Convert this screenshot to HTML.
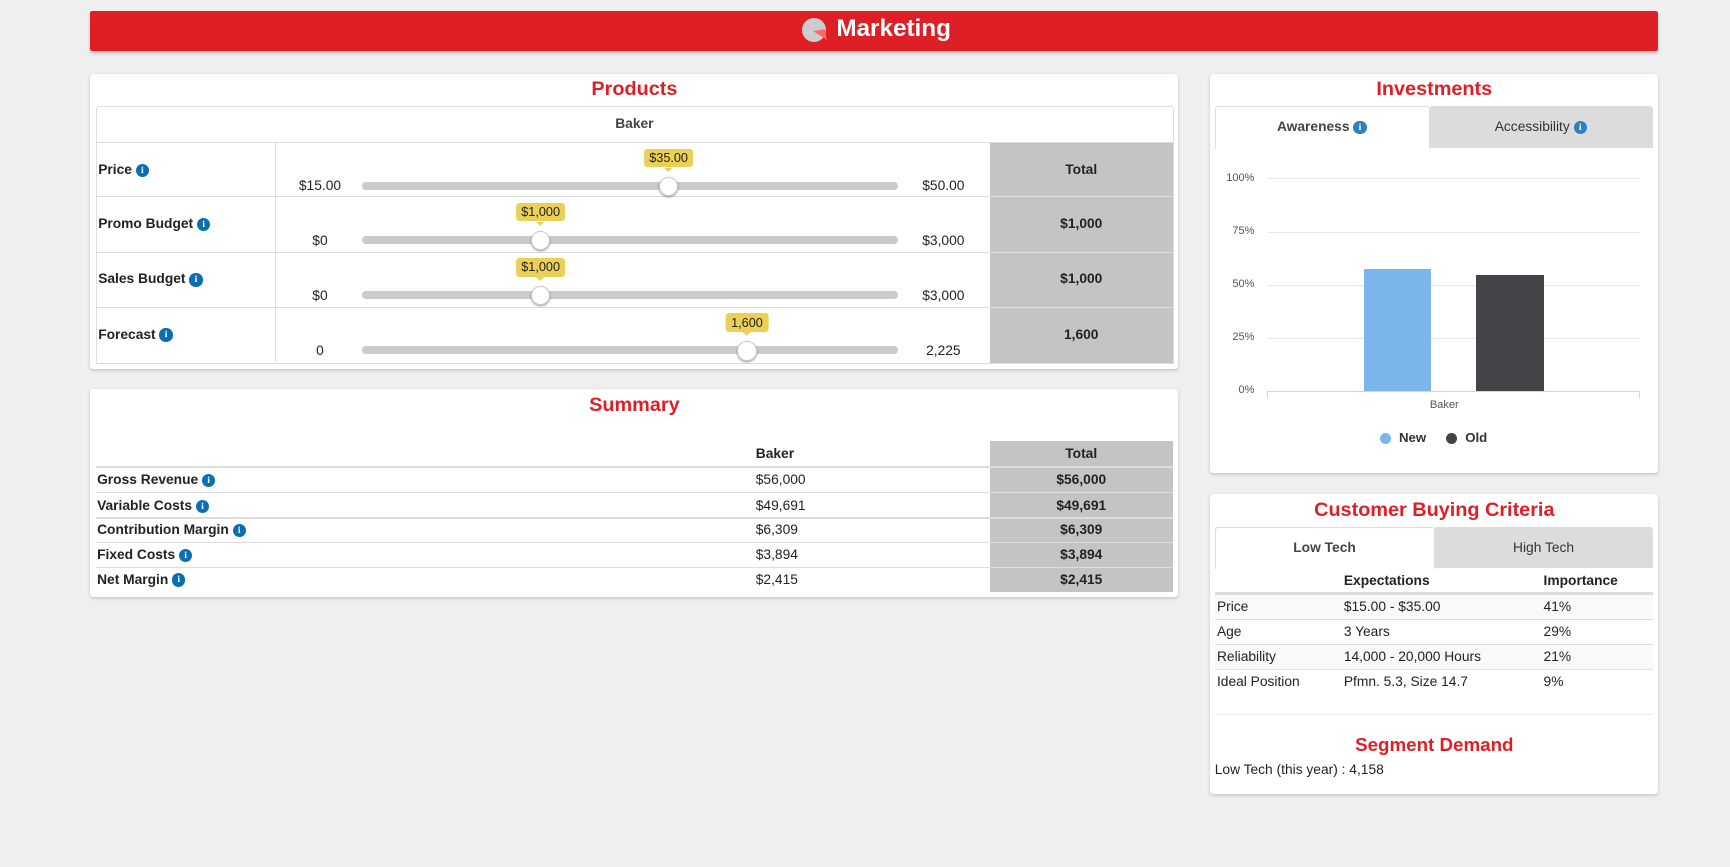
<!DOCTYPE html>
<html><head><meta charset="utf-8"><style>
html,body{margin:0;padding:0;background:#efefef;overflow:hidden}
#w{zoom:1.10332;position:relative;width:1568px;height:786px;font-family:"Liberation Sans",Arial,sans-serif;color:#222;font-size:12.5px}
.a{position:absolute}
.card{position:absolute;background:#fff;border-radius:3px;box-shadow:0 1px 3px rgba(0,0,0,.18)}
.t{position:absolute;left:0;right:0;text-align:center;color:#df1f26;font-weight:bold;font-size:18px}
.i{display:inline-block;width:12px;height:12px;border-radius:50%;background:#0a6fb0;color:#fff;font-size:9px;line-height:12px;text-align:center;font-weight:bold;vertical-align:1px;font-family:"Liberation Serif",serif}
.hl{position:absolute;height:1px;background:#ddd}
.vl{position:absolute;width:1px;background:#ddd}
.gray{position:absolute;background:#c4c4c4}
.b{font-weight:bold}
.track{position:absolute;left:328px;width:486px;height:7px;border-radius:4px;background:#cbcbcb}
.th{position:absolute;width:16px;height:16px;border-radius:50%;background:#fff;box-shadow:0 1px 2px rgba(0,0,0,.4);border:1px solid #ccc}
.tip{position:absolute;background:#ebd057;border-radius:3px;font-size:11.5px;padding:2px 5px;transform:translateX(-50%)}
.tip:after{content:"";position:absolute;left:50%;bottom:-4px;margin-left:-4px;border:4px solid transparent;border-bottom:0;border-top-color:#ebd057}
</style></head><body><div id="w">
<div class="a" style="left:82px;top:10px;width:1421px;height:36px;background:#df1f26;box-shadow:0 2px 3px rgba(0,0,0,.2);border-radius:2px"></div>
<div class="a" style="left:727px;top:16px;width:22px;height:22px;border-radius:50%;background:#ccc"></div>
<div class="a" style="left:738px;top:27px;width:0;height:0;border-left:11px solid transparent;border-top:10px solid #f66;transform:rotate(-10deg)"></div>
<div class="a" style="left:758px;top:14px;color:#fff;font-weight:bold;font-size:22px">Marketing</div>

<div class="card" style="left:82px;top:67px;width:986px;height:267px">
<div class="t" style="top:4px">Products</div></div>
<div class="a" style="left:87px;top:96px;width:975px;height:232px;border:1px solid #ddd;border-radius:3px 3px 0 0"></div>
<div class="a b" style="left:87px;top:105px;width:976px;text-align:center;color:#444">Baker</div>
<div class="gray" style="left:897px;top:129px;width:166px;height:200px"></div>
<div class="hl" style="left:87px;top:129px;width:976px"></div>
<div class="hl" style="left:87px;top:178px;width:976px"></div>
<div class="hl" style="left:87px;top:228px;width:976px"></div>
<div class="hl" style="left:87px;top:278px;width:976px"></div>
<div class="vl" style="left:249px;top:129px;height:199px"></div>
<div class="a b" style="left:89px;top:147px">Price <span class="i">i</span></div>
<div class="a b" style="left:89px;top:196px">Promo Budget <span class="i">i</span></div>
<div class="a b" style="left:89px;top:246px">Sales Budget <span class="i">i</span></div>
<div class="a b" style="left:89px;top:296px">Forecast <span class="i">i</span></div>
<div class="a b" style="left:897px;top:147px;width:166px;text-align:center">Total</div>
<div class="a b" style="left:897px;top:196px;width:166px;text-align:center">$1,000</div>
<div class="a b" style="left:897px;top:246px;width:166px;text-align:center">$1,000</div>
<div class="a b" style="left:897px;top:296px;width:166px;text-align:center">1,600</div>
<div class="a" style="left:250px;top:161px;width:80px;text-align:center">$15.00</div>
<div class="a" style="left:250px;top:211px;width:80px;text-align:center">$0</div>
<div class="a" style="left:250px;top:261px;width:80px;text-align:center">$0</div>
<div class="a" style="left:250px;top:311px;width:80px;text-align:center">0</div>
<div class="a" style="left:815px;top:161px;width:80px;text-align:center">$50.00</div>
<div class="a" style="left:815px;top:211px;width:80px;text-align:center">$3,000</div>
<div class="a" style="left:815px;top:261px;width:80px;text-align:center">$3,000</div>
<div class="a" style="left:815px;top:311px;width:80px;text-align:center">2,225</div>
<div class="track" style="top:165px"></div><div class="track" style="top:214px"></div><div class="track" style="top:264px"></div><div class="track" style="top:314px"></div>
<div class="th" style="left:597px;top:160px"></div><div class="th" style="left:481px;top:209px"></div><div class="th" style="left:481px;top:259px"></div><div class="th" style="left:668px;top:309px"></div>
<div class="tip" style="left:606px;top:135px">$35.00</div>
<div class="tip" style="left:490px;top:184px">$1,000</div>
<div class="tip" style="left:490px;top:234px">$1,000</div>
<div class="tip" style="left:677px;top:284px">1,600</div>

<div class="card" style="left:82px;top:353px;width:986px;height:188px"><div class="t" style="top:4px">Summary</div></div>
<div class="gray" style="left:897px;top:400px;width:166px;height:137px"></div>
<div class="a b" style="left:685px;top:404px">Baker</div>
<div class="a b" style="left:897px;top:404px;width:166px;text-align:center">Total</div>
<div class="a" style="left:87px;top:422px;width:976px;height:2px;background:#ddd"></div>
<div class="hl" style="left:87px;top:446px;width:976px"></div><div class="hl" style="left:87px;top:469px;width:976px"></div><div class="hl" style="left:87px;top:491px;width:976px"></div><div class="hl" style="left:87px;top:514px;width:976px"></div>
<div class="a b" style="left:88px;top:428px">Gross Revenue <span class="i">i</span></div>
<div class="a b" style="left:88px;top:451px">Variable Costs <span class="i">i</span></div>
<div class="a b" style="left:88px;top:473px">Contribution Margin <span class="i">i</span></div>
<div class="a b" style="left:88px;top:496px">Fixed Costs <span class="i">i</span></div>
<div class="a b" style="left:88px;top:518px">Net Margin <span class="i">i</span></div>
<div class="a" style="left:685px;top:428px">$56,000</div><div class="a" style="left:685px;top:451px">$49,691</div><div class="a" style="left:685px;top:473px">$6,309</div><div class="a" style="left:685px;top:496px">$3,894</div><div class="a" style="left:685px;top:518px">$2,415</div>
<div class="a b" style="left:897px;top:428px;width:166px;text-align:center">$56,000</div>
<div class="a b" style="left:897px;top:451px;width:166px;text-align:center">$49,691</div>
<div class="a b" style="left:897px;top:473px;width:166px;text-align:center">$6,309</div>
<div class="a b" style="left:897px;top:496px;width:166px;text-align:center">$3,894</div>
<div class="a b" style="left:897px;top:518px;width:166px;text-align:center">$2,415</div>

<div class="card" style="left:1097px;top:67px;width:406px;height:362px"><div class="t" style="top:4px">Investments</div></div>
<div class="a" style="left:1101px;top:96px;width:193px;height:38px;border:1px solid #ddd;border-bottom:0;border-radius:3px 3px 0 0"></div>
<div class="a" style="left:1295px;top:96px;width:203px;height:38px;background:#dcdcdc;border-radius:3px 3px 0 0"></div>
<div class="a b" style="left:1101px;top:108px;width:194px;text-align:center;color:#444">Awareness <span class="i" style="background:#2f7fc1">i</span></div>
<div class="a" style="left:1295px;top:108px;width:203px;text-align:center;color:#333">Accessibility <span class="i" style="background:#2f7fc1">i</span></div>
<div class="hl" style="left:1149px;top:161px;width:337px;background:#e6e6e6"></div>
<div class="hl" style="left:1149px;top:210px;width:337px;background:#e6e6e6"></div>
<div class="hl" style="left:1149px;top:258px;width:337px;background:#e6e6e6"></div>
<div class="hl" style="left:1149px;top:306px;width:337px;background:#e6e6e6"></div>
<div class="a" style="left:1100px;top:156px;width:37px;text-align:right;font-size:10px;color:#555">100%</div>
<div class="a" style="left:1100px;top:204px;width:37px;text-align:right;font-size:10px;color:#555">75%</div>
<div class="a" style="left:1100px;top:252px;width:37px;text-align:right;font-size:10px;color:#555">50%</div>
<div class="a" style="left:1100px;top:300px;width:37px;text-align:right;font-size:10px;color:#555">25%</div>
<div class="a" style="left:1100px;top:348px;width:37px;text-align:right;font-size:10px;color:#555">0%</div>
<div class="a" style="left:1236px;top:244px;width:61px;height:110px;background:#7cb5ec"></div>
<div class="a" style="left:1338px;top:249px;width:61px;height:105px;background:#434348"></div>
<div class="a" style="left:1148px;top:354px;width:337px;height:6px;border:1px solid #ccd6eb;border-bottom:0"></div>
<div class="a" style="left:1296px;top:362px;font-size:10px;color:#555">Baker</div>
<div class="a" style="left:1251px;top:392px;width:10px;height:10px;border-radius:50%;background:#7cb5ec"></div>
<div class="a b" style="left:1268px;top:390px;font-size:12px;color:#333">New</div>
<div class="a" style="left:1311px;top:392px;width:10px;height:10px;border-radius:50%;background:#434348"></div>
<div class="a b" style="left:1328px;top:390px;font-size:12px;color:#333">Old</div>

<div class="card" style="left:1097px;top:448px;width:406px;height:272px"><div class="t" style="top:4px">Customer Buying Criteria</div></div>
<div class="a" style="left:1101px;top:478px;width:198px;height:37px;border:1px solid #ddd;border-bottom:0;border-radius:3px 3px 0 0"></div>
<div class="a" style="left:1300px;top:478px;width:198px;height:37px;background:#dcdcdc;border-radius:3px 3px 0 0"></div>
<div class="a b" style="left:1101px;top:489px;width:199px;text-align:center;color:#444">Low Tech</div>
<div class="a" style="left:1300px;top:489px;width:198px;text-align:center;color:#333">High Tech</div>
<div class="a b" style="left:1218px;top:519px">Expectations</div><div class="a b" style="left:1399px;top:519px">Importance</div>
<div class="a" style="left:1101px;top:537px;width:397px;height:2px;background:#ddd"></div>
<div class="a" style="left:1101px;top:539px;width:397px;height:22px;background:#f9f9f9"></div>
<div class="a" style="left:1101px;top:585px;width:397px;height:22px;background:#f9f9f9"></div>
<div class="hl" style="left:1101px;top:561px;width:397px"></div><div class="hl" style="left:1101px;top:584px;width:397px"></div><div class="hl" style="left:1101px;top:606px;width:397px"></div>
<div class="a" style="left:1103px;top:543px">Price</div><div class="a" style="left:1218px;top:543px">$15.00 - $35.00</div><div class="a" style="left:1399px;top:543px">41%</div>
<div class="a" style="left:1103px;top:566px">Age</div><div class="a" style="left:1218px;top:566px">3 Years</div><div class="a" style="left:1399px;top:566px">29%</div>
<div class="a" style="left:1103px;top:588px">Reliability</div><div class="a" style="left:1218px;top:588px">14,000 - 20,000 Hours</div><div class="a" style="left:1399px;top:588px">21%</div>
<div class="a" style="left:1103px;top:611px">Ideal Position</div><div class="a" style="left:1218px;top:611px">Pfmn. 5.3, Size 14.7</div><div class="a" style="left:1399px;top:611px">9%</div>
<div class="hl" style="left:1101px;top:647px;width:397px;background:#eee"></div>
<div class="a b" style="left:1097px;top:665px;width:406px;text-align:center;color:#df1f26;font-size:17px">Segment Demand</div>
<div class="a" style="left:1101px;top:691px">Low Tech (this year) : 4,158</div>
</div></body></html>
